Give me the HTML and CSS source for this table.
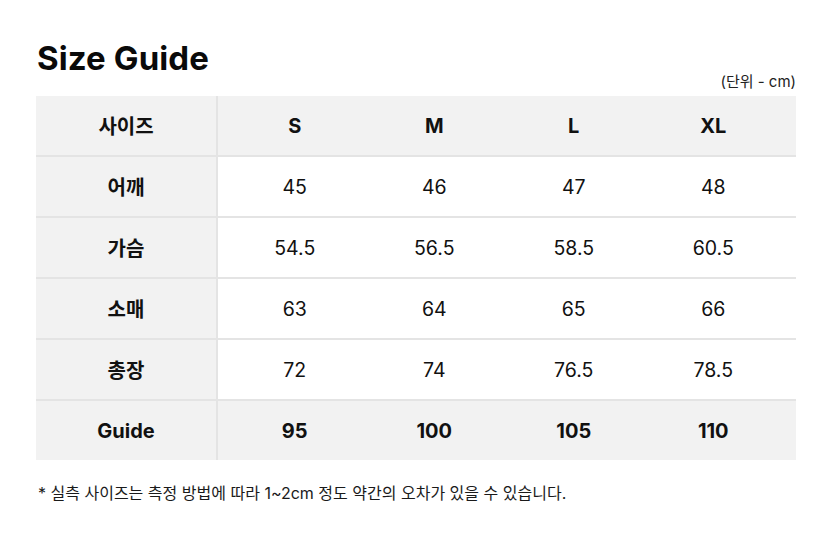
FILE: index.html
```html
<!DOCTYPE html>
<html lang="ko">
<head>
<meta charset="utf-8">
<title>Size Guide</title>
<link rel="stylesheet" href="styles.css">
</head>
<body>
<div class="page">
  <h1 class="title">Size Guide</h1>
  <div class="unit">(단위 - cm)</div>
  <div class="table">
    <div class="row head">
      <div class="label">사이즈</div>
      <div class="cells"><div>S</div><div>M</div><div>L</div><div>XL</div></div>
    </div>
    <div class="row">
      <div class="label">어깨</div>
      <div class="cells"><div>45</div><div>46</div><div>47</div><div>48</div></div>
    </div>
    <div class="row">
      <div class="label">가슴</div>
      <div class="cells"><div>54.5</div><div>56.5</div><div>58.5</div><div>60.5</div></div>
    </div>
    <div class="row">
      <div class="label">소매</div>
      <div class="cells"><div>63</div><div>64</div><div>65</div><div>66</div></div>
    </div>
    <div class="row">
      <div class="label">총장</div>
      <div class="cells"><div>72</div><div>74</div><div>76.5</div><div>78.5</div></div>
    </div>
    <div class="row guide">
      <div class="label">Guide</div>
      <div class="cells"><div>95</div><div>100</div><div>105</div><div>110</div></div>
    </div>
  </div>
  <p class="note">* 실측 사이즈는 측정 방법에 따라 1~2cm 정도 약간의 오차가 있을 수 있습니다.</p>
</div>
</body>
</html>
```

FILE: styles.css
```css
html, body {
  margin: 0;
  padding: 0;
  background: #ffffff;
}
body {
  font-family: Inter, "Noto Sans CJK KR", sans-serif;
  color: #111111;
}
.page {
  padding: 38px 36px 0 36px;
}
.title {
  margin: 0;
  font-size: 33px;
  font-weight: 700;
  letter-spacing: 0.1px;
  line-height: 40px;
  color: #0a0a0a;
  padding-left: 1px;
}
.unit {
  text-align: right;
  font-size: 15px;
  line-height: 20px;
  color: #222222;
  margin-top: -6px;
  margin-bottom: 4px;
}
.table {
  display: flex;
  flex-direction: column;
  gap: 2px;
  background: #e4e4e4;
}
.row {
  display: flex;
  height: 59px;
  background: #ffffff;
}
.label {
  width: 180px;
  flex: none;
  background: #f2f2f2;
  border-right: 2px solid #e4e4e4;
  display: flex;
  align-items: center;
  justify-content: center;
  font-weight: 700;
  font-size: 20px;
}
.cells {
  flex: 1;
  display: flex;
  padding: 0 13px 0 7px;
}
.cells > div {
  flex: 1;
  display: flex;
  align-items: center;
  justify-content: center;
  font-size: 19.5px;
}
.head, .head .cells, .guide, .guide .cells {
  background: #f2f2f2;
}
.head .cells > div, .guide .cells > div {
  font-weight: 700;
  font-size: 20px;
}
.note {
  margin: 20px 0 0 2px;
  font-size: 16px;
  color: #1a1a1a;
}
```
